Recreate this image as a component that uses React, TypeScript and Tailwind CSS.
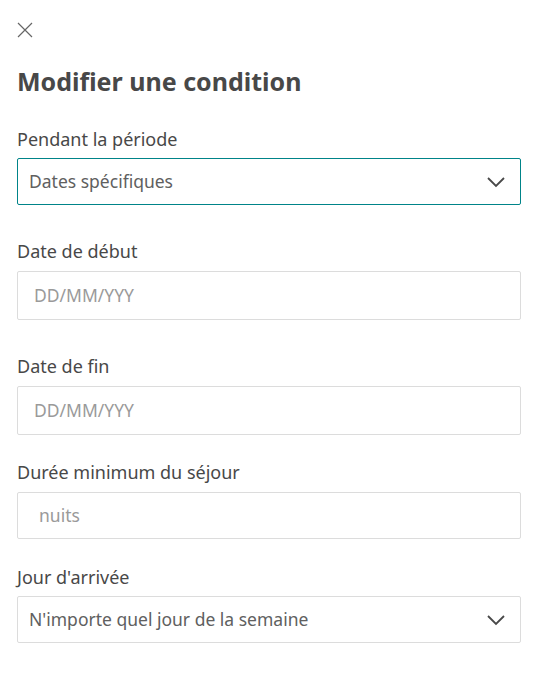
function Label({ children }: { children: React.ReactNode }) {
  return <div className="text-[18px] leading-[24px] text-[#484848]">{children}</div>
}

function SelectBox({ value, focused }: { value: string; focused?: boolean }) {
  return (
    <div
      className={[
        'mt-[7px] flex h-[47px] items-center justify-between rounded-[2px] border bg-white pl-[11px] pr-[14px]',
        focused ? 'border-[#008489]' : 'border-[#dcdcdc]',
      ].join(' ')}
    >
      <span className="text-[17.5px] text-[#606060]">{value}</span>
      <svg width="20" height="12" viewBox="0 0 20 12" fill="none">
        <path d="M2 2l8 8 8-8" stroke="#484848" strokeWidth="1.8" />
      </svg>
    </div>
  )
}

function InputBox({ placeholder, pad, h }: { placeholder: string; pad: string; h: string }) {
  return (
    <div className={`mt-[8px] flex items-center rounded-[2px] border border-[#dcdcdc] bg-white ${pad} ${h}`}>
      <span className="text-[17.5px] text-[#9a9a9a]">{placeholder}</span>
    </div>
  )
}

export default function App() {
  return (
    <div
      className="min-h-[696px] w-[539px] bg-white px-[17px] pt-[22px]"
      style={{ fontFamily: '"Noto Sans", Inter, sans-serif' }}
    >
      <svg width="16" height="16" viewBox="0 0 16 16" fill="none">
        <path d="M1 1l14 14M15 1L1 15" stroke="#666" strokeWidth="1.2" />
      </svg>

      <h1 className="mt-[26px] text-[25px] font-bold leading-[34px] text-[#484848]">
        Modifier une condition
      </h1>

      <div className="mt-[29px] w-[504px]">
        <Label>Pendant la période</Label>
        <SelectBox value="Dates spécifiques" focused />

        <div className="mt-[34px]">
          <Label>Date de début</Label>
          <InputBox placeholder="DD/MM/YYY" pad="pl-[16px]" h="h-[49px]" />
        </div>

        <div className="mt-[34px]">
          <Label>Date de fin</Label>
          <InputBox placeholder="DD/MM/YYY" pad="pl-[16px]" h="h-[49px]" />
        </div>

        <div className="mt-[25px]">
          <Label>Durée minimum du séjour</Label>
          <InputBox placeholder="nuits" pad="pl-[21px]" h="h-[47px]" />
        </div>

        <div className="mt-[26px]">
          <Label>Jour d'arrivée</Label>
          <SelectBox value="N'importe quel jour de la semaine" />
        </div>
      </div>
    </div>
  )
}
